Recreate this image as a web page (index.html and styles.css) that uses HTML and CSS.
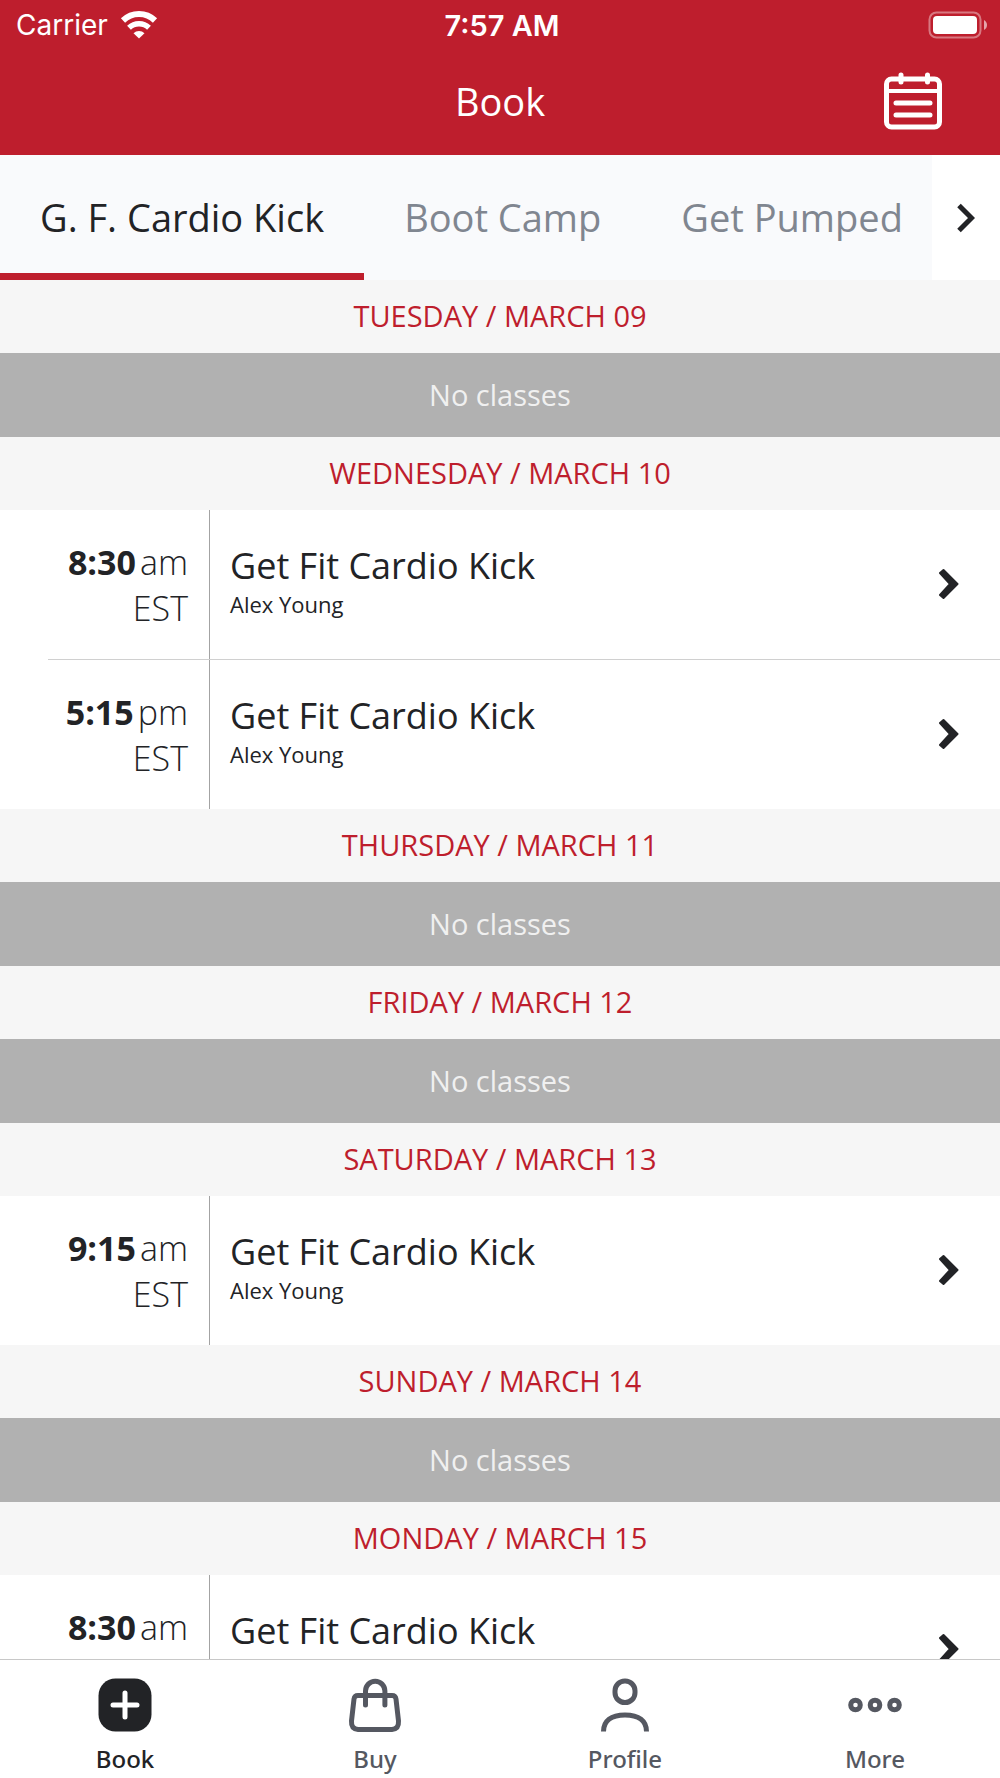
FILE: index.html
```html
<!DOCTYPE html>
<html lang="en">
<head>
    <meta charset="UTF-8">
    <meta name="viewport" content="width=device-width, initial-scale=1.0">
    <title>Book</title>
    <link rel="stylesheet" href="styles.css">
</head>
<body>
    <header class="header">
        <div class="status">
            <div class="carrier">
                <span>Carrier</span>
                <svg width="38" height="28" viewBox="0 0 38 28" fill="none" stroke="#fff" stroke-width="6">
                    <path d="M3 9.500a23 23 0 0 1 32 0"/>
                    <path d="M9 16.700a14.500 14.500 0 0 1 20 0" stroke-width="5.500"/>
                    <path d="M13.500 22.300a8 8 0 0 1 11 0L19 27.500z" fill="#fff" stroke="none"/>
                </svg>
            </div>
            <div class="clock">7:57 AM</div>
            <div class="battery">
                <svg width="60" height="28" viewBox="0 0 60 28">
                    <rect x="1.500" y="1.500" width="51" height="25" rx="7" fill="none" stroke="#fff" stroke-opacity="0.4" stroke-width="2"/>
                    <rect x="5" y="5" width="44" height="18" rx="4" fill="#fff"/>
                    <path d="M56 9c4 2 4 8 0 10z" fill="#fff" fill-opacity="0.6"/>
                </svg>
            </div>
        </div>
        <div class="title-bar">
            <h1>Book</h1>
            <button class="calendar" type="button" aria-label="Calendar">
                <svg width="58" height="60" viewBox="0 0 58 60" fill="none" stroke="#fff" stroke-width="5" stroke-linecap="round">
                    <rect x="2.500" y="8" width="53" height="48" rx="5"/>
                    <path d="M3 20h52" stroke-width="4"/>
                    <path d="M17 4v7M43.500 4v7M12 32h34M12 44h34"/>
                </svg>
            </button>
        </div>
    </header>

    <nav class="tabs">
        <div class="tab-list">
            <a class="tab active" href="#">G. F. Cardio Kick</a>
            <a class="tab" href="#">Boot Camp</a>
            <a class="tab" href="#">Get Pumped</a>
        </div>
        <button class="next" type="button" aria-label="More classes">
            <svg width="18" height="30" viewBox="0 0 18 30" fill="none" stroke="#222326" stroke-width="5">
                <path d="M2 2.500L14.500 15 2 27.500"/>
            </svg>
        </button>
    </nav>

    <main class="schedule">
        <h2>TUESDAY / MARCH 09</h2>
        <p class="empty">No classes</p>

        <h2>WEDNESDAY / MARCH 10</h2>
        <ul>
            <li>
                <div class="time"><span><b>8:30</b>am</span><span>EST</span></div>
                <a class="class-link" href="#">
                    <span class="info"><span class="name">Get Fit Cardio Kick</span><span class="coach">Alex Young</span></span>
                    <svg class="arrow" width="20" height="32" viewBox="0 0 20 32"><path d="M1 5L4.500 2 18.500 16 4.500 30 1 27 11 16z"/></svg>
                </a>
            </li>
            <li>
                <div class="time"><span><b>5:15</b>pm</span><span>EST</span></div>
                <a class="class-link" href="#">
                    <span class="info"><span class="name">Get Fit Cardio Kick</span><span class="coach">Alex Young</span></span>
                    <svg class="arrow" width="20" height="32" viewBox="0 0 20 32"><path d="M1 5L4.500 2 18.500 16 4.500 30 1 27 11 16z"/></svg>
                </a>
            </li>
        </ul>

        <h2>THURSDAY / MARCH 11</h2>
        <p class="empty">No classes</p>

        <h2>FRIDAY / MARCH 12</h2>
        <p class="empty">No classes</p>

        <h2>SATURDAY / MARCH 13</h2>
        <ul>
            <li>
                <div class="time"><span><b>9:15</b>am</span><span>EST</span></div>
                <a class="class-link" href="#">
                    <span class="info"><span class="name">Get Fit Cardio Kick</span><span class="coach">Alex Young</span></span>
                    <svg class="arrow" width="20" height="32" viewBox="0 0 20 32"><path d="M1 5L4.500 2 18.500 16 4.500 30 1 27 11 16z"/></svg>
                </a>
            </li>
        </ul>

        <h2>SUNDAY / MARCH 14</h2>
        <p class="empty">No classes</p>

        <h2>MONDAY / MARCH 15</h2>
        <ul>
            <li>
                <div class="time"><span><b>8:30</b>am</span></div>
                <a class="class-link" href="#">
                    <span class="info"><span class="name">Get Fit Cardio Kick</span></span>
                    <svg class="arrow" width="20" height="32" viewBox="0 0 20 32"><path d="M1 5L4.500 2 18.500 16 4.500 30 1 27 11 16z"/></svg>
                </a>
            </li>
        </ul>
    </main>

    <nav class="bottom-nav">
        <a class="active" href="#">
            <svg width="54" height="54" viewBox="0 0 54 54">
                <rect x="0.500" y="0.500" width="53" height="53" rx="17" fill="#222326"/>
                <path d="M27 15v24M15 27h24" stroke="#fff" stroke-width="5" stroke-linecap="round"/>
            </svg>
            Book
        </a>
        <a href="#">
            <svg width="54" height="54" viewBox="0 0 54 54" fill="none" stroke="#555861" stroke-width="5" stroke-linecap="round">
                <path d="M10 17.500h34q3.500 0 4 3.500l2.500 22q.5 8-6.500 8.500H10q-7-.5-6.500-8.500L6 21q.5-3.500 4-3.500z"/>
                <path d="M17.500 27V13a9.700 9.700 0 0 1 19.400 0v14"/>
            </svg>
            Buy
        </a>
        <a href="#">
            <svg width="54" height="54" viewBox="0 0 54 54" fill="none" stroke="#555861" stroke-width="5">
                <rect x="17" y="3" width="20" height="21.500" rx="9.800"/>
                <path d="M5.500 53.500C5.500 43 13 37 27 37s21.500 6 21.500 16.500"/>
            </svg>
            Profile
        </a>
        <a href="#">
            <svg width="54" height="54" viewBox="0 0 54 54" fill="none" stroke="#555861" stroke-width="5">
                <circle cx="7.500" cy="27" r="4.800"/>
                <circle cx="27" cy="27" r="4.800"/>
                <circle cx="46.500" cy="27" r="4.800"/>
            </svg>
            More
        </a>
    </nav>
</body>
</html>
```

FILE: styles.css
```css
* {
    box-sizing: border-box;
}

body {
    margin: 0;
    height: 100vh;
    display: flex;
    flex-direction: column;
    font-family: "Open Sans", "Noto Sans", sans-serif;
    color: #222326;
    background-color: #fff;
}

a {
    color: inherit;
    text-decoration: none;
}

button {
    padding: 0;
    border: none;
    background: none;
    cursor: pointer;
}

svg {
    display: block;
    flex-shrink: 0;
}

/* header */
.header {
    background-color: #be1e2d;
    color: #fff;
}

.status {
    display: grid;
    grid-template-columns: 1fr auto 1fr;
    align-items: center;
    height: 50px;
    padding: 0 12px 0 16px;
    font-family: Inter, sans-serif;
    font-size: 28px;
}

.carrier {
    display: flex;
    align-items: center;
    gap: 12px;
}

.clock {
    font-size: 29px;
    font-weight: 600;
}

.battery {
    justify-self: end;
}

.title-bar {
    display: grid;
    grid-template-columns: 1fr auto 1fr;
    align-items: center;
    height: 105px;
    padding: 0 58px 4px;
}

h1 {
    grid-column: 2;
    margin: 0;
    font-size: 38px;
    font-weight: 400;
}

.calendar {
    justify-self: end;
}

/* class tabs */
.tabs {
    display: flex;
    height: 125px;
}

.tab-list {
    flex: 1;
    display: flex;
    overflow: hidden;
    background-color: #f9fafc;
}

.tab {
    display: flex;
    align-items: center;
    padding: 6px 40px 0;
    border-bottom: 7px solid transparent;
    font-size: 38px;
    white-space: nowrap;
    color: #808690;
}

.tab.active {
    color: #222326;
    border-color: #be1e2d;
}

.next {
    display: flex;
    align-items: center;
    justify-content: center;
    width: 68px;
}

/* schedule */
.schedule {
    flex: 1;
    min-height: 0;
    overflow: hidden;
}

h2 {
    margin: 0;
    padding-bottom: 2px;
    background-color: #f6f6f6;
    color: #be1e2d;
    font-size: 29px;
    font-weight: 400;
    line-height: 71px;
    text-align: center;
}

.empty {
    margin: 0;
    background-color: #b1b1b1;
    color: #f0f0f0;
    font-size: 29px;
    line-height: 84px;
    text-align: center;
}

ul {
    list-style: none;
    margin: 0;
    padding: 0 0 0 48px;
}

li {
    display: flex;
    height: 149px;
}

li + li {
    border-top: 1px solid #d0d0d0;
    height: 150px;
}

.time {
    display: flex;
    flex-direction: column;
    align-items: flex-end;
    width: 162px;
    padding: 29px 21px 0 0;
    border-right: 1px solid #a3a3a3;
    font-size: 34px;
    font-weight: 300;
    line-height: 46px;
}

.time b {
    margin-right: 4px;
    font-weight: 700;
}

.class-link {
    flex: 1;
    display: flex;
    justify-content: space-between;
    align-items: center;
    padding: 0 41px 2px 20px;
}

.info {
    display: flex;
    flex-direction: column;
    align-self: flex-start;
    padding-top: 32px;
}

.name {
    font-size: 36px;
    line-height: 48px;
}

.coach {
    font-size: 22px;
    line-height: 28px;
}

.arrow {
    fill: #222326;
    stroke: #222326;
    stroke-width: 2;
    stroke-linejoin: round;
}

/* bottom navigation */
.bottom-nav {
    display: grid;
    grid-template-columns: repeat(4, 1fr);
    height: 119px;
    border-top: 1px solid #c8c8c8;
    background-color: #fff;
}

.bottom-nav a {
    display: flex;
    flex-direction: column;
    align-items: center;
    gap: 10px;
    padding-top: 18px;
    color: #555861;
    font-family: "Noto Sans", sans-serif;
    font-size: 24px;
    font-weight: 500;
    line-height: 34px;
}

.bottom-nav .active {
    color: #222326;
}
```
